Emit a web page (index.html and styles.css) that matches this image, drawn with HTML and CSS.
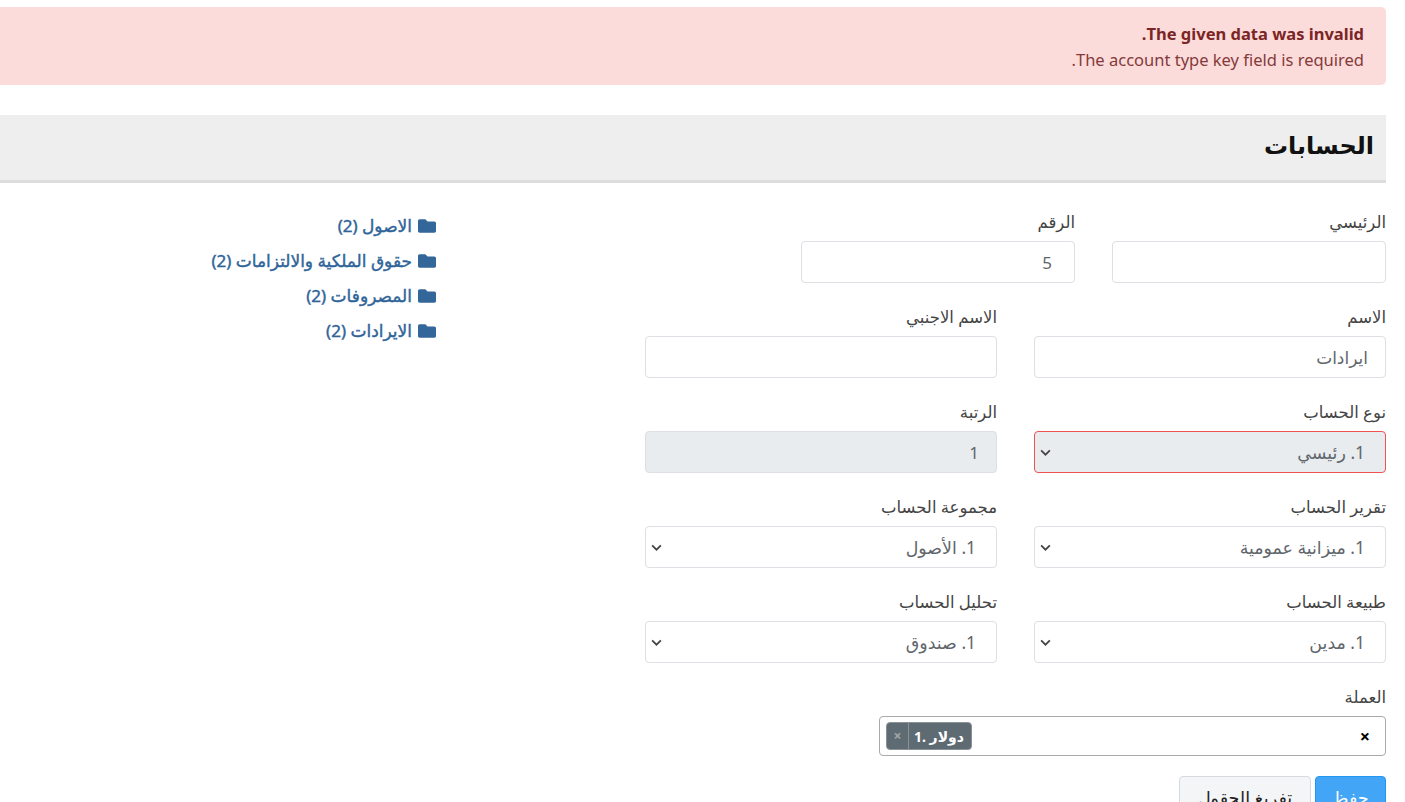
FILE: index.html
```
<!DOCTYPE html>
<html lang="ar" dir="rtl">
<head>
<meta charset="utf-8">
<title>الحسابات</title>
<link rel="stylesheet" href="styles.css">
</head>
<body>
<div class="page">
  <div class="alert">
    <strong class="alert-title">The given data was invalid.</strong>
    <div>The account type key field is required.</div>
  </div>
  <h1 class="title-bar">الحسابات</h1>
  <div class="content">
    <form class="form">
      <div class="row row-narrow">
        <div class="field"><label>الرئيسي</label><input class="control" type="text"></div>
        <div class="field"><label>الرقم</label><input class="control pad-l" type="text" value="5"></div>
      </div>
      <div class="row">
        <div class="field"><label>الاسم</label><input class="control pad-s" type="text" value="ايرادات"></div>
        <div class="field"><label>الاسم الاجنبي</label><input class="control" type="text"></div>
      </div>
      <div class="row">
        <div class="field"><label>نوع الحساب</label><select class="control select is-invalid"><option>1. رئيسي</option></select></div>
        <div class="field"><label>الرتبة</label><input class="control pad-s is-disabled" type="text" value="1" readonly></div>
      </div>
      <div class="row">
        <div class="field"><label>تقرير الحساب</label><select class="control select"><option>1. ميزانية عمومية</option></select></div>
        <div class="field"><label>مجموعة الحساب</label><select class="control select"><option>1. الأصول</option></select></div>
      </div>
      <div class="row">
        <div class="field"><label>طبيعة الحساب</label><select class="control select"><option>1. مدين</option></select></div>
        <div class="field"><label>تحليل الحساب</label><select class="control select"><option>1. صندوق</option></select></div>
      </div>
      <div class="field field-currency">
        <label>العملة</label>
        <div class="multi">
          <span class="chip"><span class="chip-x">×</span><span class="chip-text">دولار .1</span></span>
          <span class="multi-clear">×</span>
        </div>
      </div>
      <div class="actions">
        <button class="btn btn-primary" type="button">حفظ</button>
        <button class="btn btn-light" type="button">تفريغ الحقول</button>
      </div>
    </form>
    <ul class="tree">
      <li><svg class="folder" viewBox="0 0 512 512"><path d="M464 128H272l-64-64H48C21.49 64 0 85.49 0 112v288c0 26.51 21.49 48 48 48h416c26.51 0 48-21.49 48-48V176c0-26.51-21.49-48-48-48z"/></svg><span>الاصول (2)</span></li>
      <li><svg class="folder" viewBox="0 0 512 512"><path d="M464 128H272l-64-64H48C21.49 64 0 85.49 0 112v288c0 26.51 21.49 48 48 48h416c26.51 0 48-21.49 48-48V176c0-26.51-21.49-48-48-48z"/></svg><span>حقوق الملكية والالتزامات (2)</span></li>
      <li><svg class="folder" viewBox="0 0 512 512"><path d="M464 128H272l-64-64H48C21.49 64 0 85.49 0 112v288c0 26.51 21.49 48 48 48h416c26.51 0 48-21.49 48-48V176c0-26.51-21.49-48-48-48z"/></svg><span>المصروفات (2)</span></li>
      <li><svg class="folder" viewBox="0 0 512 512"><path d="M464 128H272l-64-64H48C21.49 64 0 85.49 0 112v288c0 26.51 21.49 48 48 48h416c26.51 0 48-21.49 48-48V176c0-26.51-21.49-48-48-48z"/></svg><span>الايرادات (2)</span></li>
    </ul>
  </div>
</div>
</body>
</html>
```
FILE: styles.css
```
* { box-sizing: border-box; }
html, body { margin: 0; height: 802px; overflow: hidden; background: #fff; }
body {
  font-family: "Noto Sans", "DejaVu Sans", sans-serif;
  font-size: 16px;
  color: #495057;
}
.page { width: 1386px; margin-right: 19px; padding-top: 7px; }
.alert {
  height: 78px;
  padding: 14px 22px 0;
  background: #fcdcdb;
  color: #843a3a;
  border-radius: 0 5px 5px 0;
  font-size: 16.5px;
  line-height: 26px;
}
.alert-title { font-weight: 700; display: block; color: #7b2525; }
.title-bar {
  margin: 30px 0 0;
  height: 68px;
  padding: 0 12px;
  background: #eee;
  border-bottom: 3px solid #ddd;
  color: #111;
  font-size: 24px;
  font-weight: 700;
  line-height: 60px;
}
.content { display: flex; padding-top: 27px; }
.form { width: 741px; flex: none; }
.row { display: grid; grid-template-columns: 352px 352px; column-gap: 37px; margin-bottom: 22px; }
.row-narrow { grid-template-columns: 274px 274px; }
.field label { display: block; height: 24px; line-height: 24px; margin-bottom: 7px; font-size: 16.5px; color: #444; }
.control {
  display: block;
  width: 100%;
  height: 42px;
  padding: 0 20px;
  font: inherit;
  font-size: 17px;
  color: #5f666c;
  background: #fff;
  border: 1px solid #dcdfe3;
  border-radius: 4px;
  outline: none;
}
.pad-s { padding-right: 17px; }
.pad-l { padding-right: 22px; }
.select {
  appearance: none;
  -webkit-appearance: none;
  padding-right: 20px;
  font-size: 17.4px;
  background-image: url("data:image/svg+xml,%3Csvg xmlns='http://www.w3.org/2000/svg' viewBox='0 0 12 8'%3E%3Cpath d='M1 1.5l5 5 5-5' fill='none' stroke='%23444' stroke-width='2'/%3E%3C/svg%3E");
  background-repeat: no-repeat;
  background-position: left 5px center;
  background-size: 11px 7px;
}
.is-invalid { background-color: #e9ecef; border-color: #ef5350; }
.is-disabled { background: #e9ecef; }
.field-currency { width: 507px; }
.multi {
  display: flex;
  direction: ltr;
  align-items: center;
  justify-content: space-between;
  height: 40px;
  padding: 0 15px 0 6px;
  border: 1px solid #aaa;
  border-radius: 4px;
}
.chip {
  display: flex;
  align-items: center;
  height: 28px;
  background: #5f6b73;
  border: 1px solid #8a9298;
  border-radius: 4px;
  color: #fff;
  font-size: 14px;
  font-weight: 700;
}
.chip-text { padding: 0 7px 0 5px; white-space: nowrap; direction: ltr; unicode-bidi: plaintext; }
.chip-x { width: 22px; height: 100%; text-align: center; line-height: 26px; color: #a0a6aa; font-size: 14px; border-right: 1px solid #8a9298; }
.multi-clear { color: #000; font-size: 18px; font-weight: 700; line-height: 1; }
.actions { display: flex; gap: 4px; margin-top: 20px; }
.btn { height: 42px; padding: 0; font: inherit; font-size: 17.5px; border-radius: 4px; border: 1px solid; }
.btn-primary { width: 71px; background: #42a5f5; border-color: #2196f3; color: #fff; }
.btn-light { width: 132px; background: #f4f5f7; border-color: #d6d9de; color: #222; }
.tree { list-style: none; margin: -2px 209px 0 0; padding: 0; font-size: 17px; color: #2f6499; -webkit-text-stroke: 0.4px #2f6499; }
.tree li { display: flex; align-items: center; gap: 6px; height: 35px; white-space: nowrap; }
.folder { width: 18px; height: 18px; fill: #336699; flex: none; }
```
